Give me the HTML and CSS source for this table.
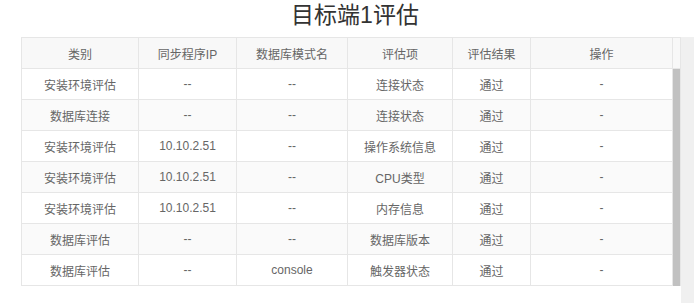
FILE: index.html
```html
<!DOCTYPE html>
<html lang="zh-CN">
<head>
<meta charset="utf-8">
<title>目标端1评估</title>
<link rel="stylesheet" href="styles.css">
</head>
<body>
<div class="page">
  <div class="content">
    <h1 class="title">目标端1评估</h1>
    <div class="main">
      <div class="table">
        <div class="thead">
          <div class="row">
            <div class="cell">类别</div>
            <div class="cell">同步程序IP</div>
            <div class="cell">数据库模式名</div>
            <div class="cell">评估项</div>
            <div class="cell">评估结果</div>
            <div class="cell">操作</div>
          </div>
          <div class="head-fill"></div>
        </div>
        <div class="tbody">
          <div class="rows">
            <div class="row">
              <div class="cell">安装环境评估</div><div class="cell">--</div><div class="cell">--</div><div class="cell">连接状态</div><div class="cell">通过</div><div class="cell">-</div>
            </div>
            <div class="row striped">
              <div class="cell">数据库连接</div><div class="cell">--</div><div class="cell">--</div><div class="cell">连接状态</div><div class="cell">通过</div><div class="cell">-</div>
            </div>
            <div class="row">
              <div class="cell">安装环境评估</div><div class="cell">10.10.2.51</div><div class="cell">--</div><div class="cell">操作系统信息</div><div class="cell">通过</div><div class="cell">-</div>
            </div>
            <div class="row striped">
              <div class="cell">安装环境评估</div><div class="cell">10.10.2.51</div><div class="cell">--</div><div class="cell">CPU类型</div><div class="cell">通过</div><div class="cell">-</div>
            </div>
            <div class="row">
              <div class="cell">安装环境评估</div><div class="cell">10.10.2.51</div><div class="cell">--</div><div class="cell">内存信息</div><div class="cell">通过</div><div class="cell">-</div>
            </div>
            <div class="row striped">
              <div class="cell">数据库评估</div><div class="cell">--</div><div class="cell">--</div><div class="cell">数据库版本</div><div class="cell">通过</div><div class="cell">-</div>
            </div>
            <div class="row">
              <div class="cell">数据库评估</div><div class="cell">--</div><div class="cell">console</div><div class="cell">触发器状态</div><div class="cell">通过</div><div class="cell">-</div>
            </div>
          </div>
          <div class="scrollbar"></div>
        </div>
      </div>
      <div class="side"></div>
    </div>
  </div>
</div>
</body>
</html>
```

FILE: styles.css
```css
html, body {
  margin: 0;
  padding: 0;
  background: #ffffff;
  font-family: "Liberation Sans", "Noto Sans CJK SC", sans-serif;
}

.page {
  width: 694px;
  height: 303px;
  overflow: hidden;
}

.title {
  margin: 0;
  width: 681px;
  box-sizing: border-box;
  padding-left: 29px;
  height: 37px;
  line-height: 30px;
  text-align: center;
  font-size: 23px;
  font-weight: normal;
  color: #333333;
}

.main {
  display: flex;
  height: 266px;
}

.table {
  margin-left: 21px;
  width: 660px;
  height: 249px;
  box-sizing: border-box;
  border-left: 1px solid #e6e6e6;
  border-top: 1px solid #e6e6e6;
  border-right: 1px solid #e6e6e6;
  align-self: flex-start;
}

.side {
  flex: 1;
  background: #f0f0f0;
}

.thead {
  display: flex;
  background: #f8f8f8;
}

.head-fill {
  width: 7px;
  height: 31px;
  box-sizing: border-box;
  border-bottom: 1px solid #e6e6e6;
}

.tbody {
  display: flex;
}

.rows {
  width: 651px;
}

.scrollbar {
  width: 7px;
  background: #c1c1c1;
}

.row {
  display: grid;
  grid-template-columns: 117px 98px 111px 105px 78px 142px;
}

.row.striped {
  background: #fafafa;
}

.cell {
  height: 31px;
  box-sizing: border-box;
  border-right: 1px solid #e6e6e6;
  border-bottom: 1px solid #e6e6e6;
  display: flex;
  align-items: center;
  justify-content: center;
  font-size: 12px;
  color: #666666;
  white-space: nowrap;
}
```
